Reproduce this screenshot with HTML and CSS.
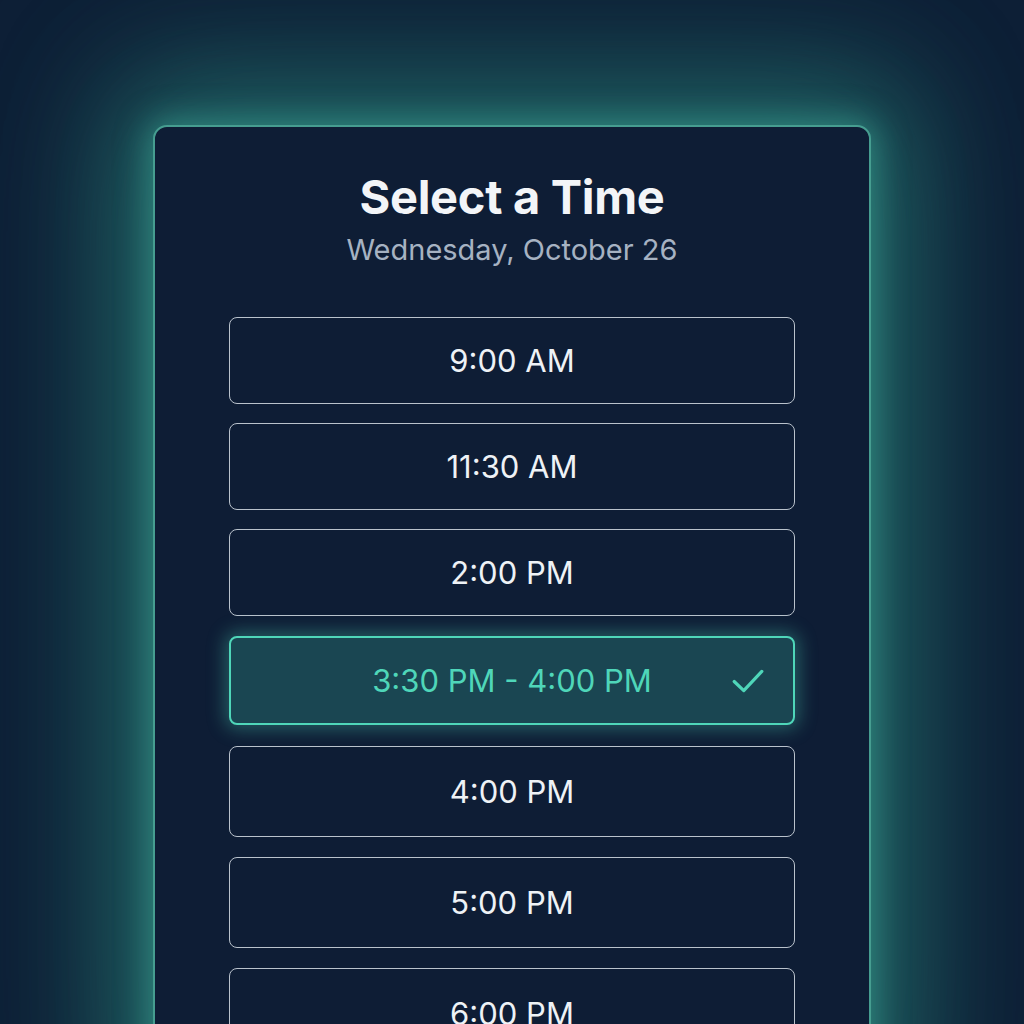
FILE: index.html
```html
<!DOCTYPE html>
<html lang="en">
<head>
<meta charset="utf-8">
<title>Select a Time</title>
<link rel="stylesheet" href="styles.css">
</head>
<body>
<main class="stage">
  <section class="card">
    <h1 class="title">Select a Time</h1>
    <p class="subtitle">Wednesday, October 26</p>
    <ul class="slots">
      <li class="slot">9:00 AM</li>
      <li class="slot">11:30 AM</li>
      <li class="slot">2:00 PM</li>
      <li class="slot selected">3:30 PM - 4:00 PM
        <svg class="check" viewBox="0 0 32 24" width="34" height="26" aria-hidden="true"><path d="M3 12.5 L12 21 L29 3" fill="none" stroke="currentColor" stroke-width="3" stroke-linecap="round" stroke-linejoin="round"/></svg>
      </li>
      <li class="slot after">4:00 PM</li>
      <li class="slot after">5:00 PM</li>
      <li class="slot after">6:00 PM</li>
    </ul>
  </section>
</main>
</body>
</html>
```
FILE: styles.css
```css
* { box-sizing: border-box; }
html, body { margin: 0; height: 100%; }
body {
  background: #0e1f36;
  font-family: Inter, "Noto Sans", sans-serif;
  overflow: hidden;
}
.stage {
  width: 1024px;
  height: 1024px;
  display: flex;
  justify-content: center;
  padding-top: 125px;
  background: #0e1f36;
}
.card {
  width: 718px;
  height: 1000px;
  background: #0e1d35;
  border: 2px solid #469d90;
  border-radius: 14px;
  box-shadow:
    0 0 30px 6px rgba(60,165,150,0.55),
    0 0 110px 40px rgba(45,140,128,0.55),
    0 -20px 170px 50px rgba(30,105,105,0.3);
  display: flex;
  flex-direction: column;
  align-items: center;
  padding-top: 40px;
}
.title {
  margin: 0;
  color: #f3f5f8;
  font-size: 47px;
  font-weight: 700;
  letter-spacing: -0.3px;
  line-height: 60px;
}
.subtitle {
  margin: 0;
  color: #a6b2c2;
  font-size: 29px;
  line-height: 40px;
  margin-top: 3px;
}
.slots {
  list-style: none;
  margin: 47px 0 0;
  padding: 0;
  width: 566px;
  display: flex;
  flex-direction: column;
  gap: 19px;
}
.slot {
  position: relative;
  height: 87px;
  border: 1.5px solid #b9c2cc;
  border-radius: 8px;
  display: flex;
  align-items: center;
  justify-content: center;
  color: #eef2f6;
  font-size: 31px;
}
.slot.after {
  height: 91px;
  margin-top: 1px;
}
.slot.selected {
  height: 89px;
  margin: 1px 0 1px;
  border: 2.5px solid #4fd6b9;
  background: #1a4652;
  color: #4fd6b9;
  box-shadow: 0 0 18px 4px rgba(79,214,185,0.35);
}
.check {
  position: absolute;
  right: 28px;
  top: 50%;
  transform: translateY(-50%);
  color: #4fd6b9;
}
```
